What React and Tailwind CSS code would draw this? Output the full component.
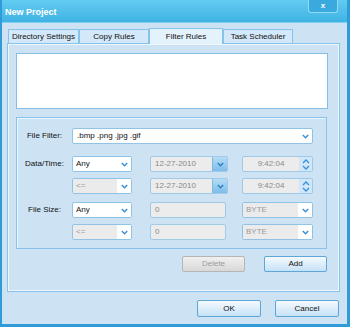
import React from 'react'

const Chevron = ({ color = '#3b8fd4' }) => (
  <svg width="7" height="5" viewBox="0 0 7 5">
    <path d="M0.8 1 L3.5 3.8 L6.2 1" fill="none" stroke={color} strokeWidth="1.4" />
  </svg>
)

const Select = ({ value, disabled, w = 'w-[60px]' }) => (
  <div className={`${w} h-[16px] flex border border-[#8fc4e7] rounded-[2px] bg-white`}>
    <div className={`flex-1 flex items-center pl-[3px] ${disabled ? 'bg-[#ebebeb] text-[#9a9a9a]' : 'text-[#111]'}`}>
      {value}
    </div>
    <div className="w-[14px] flex items-center justify-center bg-white">
      <Chevron />
    </div>
  </div>
)

const DateBox = () => (
  <div className="w-[78px] h-[16px] flex border border-[#9fc9e6] rounded-[2px] bg-[#ececec]">
    <div className="flex-1 flex items-center pl-[4px] text-[#8a8a8a]">12-27-2010</div>
    <div className="w-[15px] flex items-center justify-center bg-gradient-to-b from-[#b6ddf5] to-[#7cbde9] border-l border-[#7fb8e0]">
      <Chevron color="#2f7fc4" />
    </div>
  </div>
)

const TimeBox = () => (
  <div className="w-[71px] h-[16px] flex border border-[#9fc9e6] rounded-[2px] bg-[#ececec]">
    <div className="flex-1 flex items-center justify-center text-[#8a8a8a]">9:42:04</div>
    <div className="w-[13px] flex items-center justify-center bg-[#cfe7f8]">
      <svg width="8" height="11" viewBox="0 0 8 11">
        <path d="M1 4 L4 1 L7 4" fill="none" stroke="#3b8fd4" strokeWidth="1.3" />
        <path d="M1 7 L4 10 L7 7" fill="none" stroke="#3b8fd4" strokeWidth="1.3" />
      </svg>
    </div>
  </div>
)

const Button = ({ children, disabled, w = 'w-[63px]', h = 'h-[16px]' }) => (
  <div
    className={`${w} ${h} flex items-center justify-center rounded-[2px] border ${
      disabled
        ? 'border-[#b5b5b5] bg-gradient-to-b from-[#f0f0f0] to-[#d8d8d8] text-[#9c9c9c]'
        : 'border-[#5fa6d8] bg-gradient-to-b from-[#f4faff] to-[#c6e2f6] text-[#111]'
    }`}
  >
    {children}
  </div>
)

export default function App() {
  const tabs = [
    { label: 'Directory Settings', w: 'w-[71px]' },
    { label: 'Copy Rules', w: 'w-[70px]' },
    { label: 'Filter Rules', w: 'w-[74px]', active: true },
    { label: 'Task Scheduler', w: 'w-[70px]' }
  ]

  return (
    <div className="w-[350px] h-[327px] flex flex-col bg-[#cde2f3] border-l-2 border-r-[3px] border-b-[3px] border-[#2f9bd8] overflow-hidden font-['Liberation_Sans',sans-serif] text-[8px] leading-none">
      {/* title bar */}
      <div className="h-[23px] flex justify-between bg-gradient-to-b from-[#62cbf1] to-[#3fb3e4] border-b border-[#7fd0f0]">
        <div className="pl-[3px] pt-[8px] text-white font-bold text-[9px]">New Project</div>
        <div className="mr-[9px] w-[30px] h-[13px] flex items-center justify-center rounded-b-[3px] border border-t-0 border-[#8fdaf6] bg-[#3aaade] text-white font-bold text-[8px]">
          x
        </div>
      </div>

      {/* tabs */}
      <div className="mt-[4px] ml-[6px] flex items-end h-[16px]">
        {tabs.map((t) => (
          <div
            key={t.label}
            className={`${t.w} flex items-center justify-center border border-b-0 border-[#86c3ea] text-[#111] ${
              t.active ? 'h-[16px] bg-[#e4f2fc] relative z-10 -mb-px' : 'h-[14px] bg-[#d3e8f8]'
            }`}
          >
            {t.label}
          </div>
        ))}
      </div>

      {/* panel */}
      <div className="ml-[5px] w-[333px] h-[249px] border border-[#86c3ea] shadow-[inset_1px_1px_0_#eef7fd,inset_-1px_-1px_0_#eef7fd] flex flex-col pl-[8px]">
        <div className="mt-[9px] w-[312px] h-[56px] bg-white border border-[#86bfe3]" />

        <div className="mt-[8px] w-[311px] h-[132px] border border-[#86c3ea] shadow-[inset_1px_1px_0_#eaf5fd] flex flex-col">
          <div className="mt-[10px] flex items-center h-[16px]">
            <div className="w-[55px] text-center text-[#111]">File Filter:</div>
            <div className="w-[241px] h-[16px] flex border border-[#8fc4e7] rounded-[2px] bg-white">
              <div className="flex-1 flex items-center pl-[4px] text-[#111]">.bmp .png .jpg .gif</div>
              <div className="w-[14px] flex items-center justify-center">
                <Chevron />
              </div>
            </div>
          </div>

          <div className="mt-[12px] flex items-center h-[16px]">
            <div className="w-[55px] text-center text-[#111]">Data/Time:</div>
            <Select value="Any" />
            <div className="w-[18px]" />
            <DateBox />
            <div className="w-[14px]" />
            <TimeBox />
          </div>

          <div className="mt-[6px] flex items-center h-[16px]">
            <div className="w-[55px]" />
            <Select value="<=" disabled />
            <div className="w-[18px]" />
            <DateBox />
            <div className="w-[14px]" />
            <TimeBox />
          </div>

          <div className="mt-[8px] flex items-center h-[16px]">
            <div className="w-[55px] text-center text-[#111]">File Size:</div>
            <Select value="Any" />
            <div className="w-[18px]" />
            <div className="w-[76px] h-[16px] flex items-center pl-[4px] border border-[#9fc9e6] rounded-[2px] bg-[#ececec] text-[#8a8a8a]">0</div>
            <div className="w-[16px]" />
            <Select value="BYTE" disabled w="w-[71px]" />
          </div>

          <div className="mt-[6px] flex items-center h-[16px]">
            <div className="w-[55px]" />
            <Select value="<=" disabled />
            <div className="w-[18px]" />
            <div className="w-[76px] h-[16px] flex items-center pl-[4px] border border-[#9fc9e6] rounded-[2px] bg-[#ececec] text-[#8a8a8a]">0</div>
            <div className="w-[16px]" />
            <Select value="BYTE" disabled w="w-[71px]" />
          </div>
        </div>

        <div className="mt-[7px] w-[311px] flex justify-end gap-[19px]">
          <Button disabled>Delete</Button>
          <Button>Add</Button>
        </div>
      </div>

      {/* dialog buttons */}
      <div className="mt-[8px] ml-[195px] flex gap-[14px]">
        <Button w="w-[64px]" h="h-[17px]">OK</Button>
        <Button w="w-[64px]" h="h-[17px]">Cancel</Button>
      </div>
    </div>
  )
}
